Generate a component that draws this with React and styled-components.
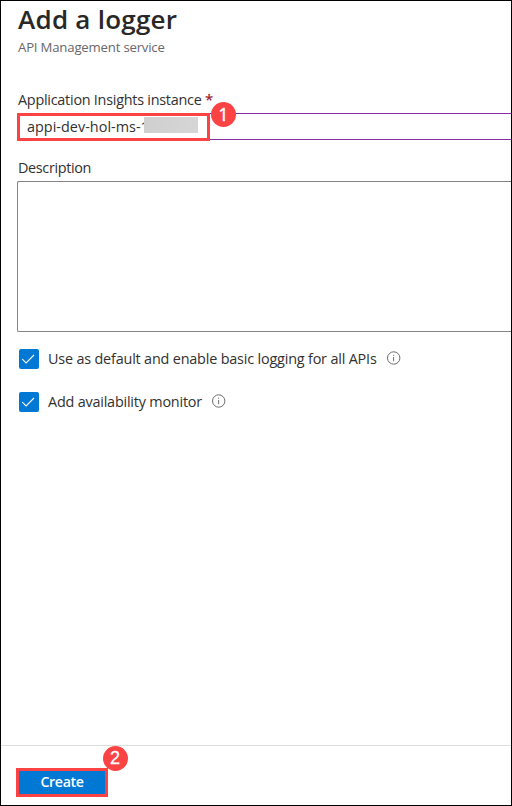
import React from "react";
import styled, { createGlobalStyle } from "styled-components";

const GlobalStyle = createGlobalStyle`
  *, *::before, *::after { box-sizing: border-box; }
  body { margin: 0; background: #fff; }
`;

const Panel = styled.main`
  width: 512px;
  height: 806px;
  border: 1px solid #000;
  background: #fff;
  color: #323130;
  font-family: "Open Sans", "Noto Sans", sans-serif;
  font-size: 14.4px;
  line-height: 20px;
  display: flex;
  flex-direction: column;
  overflow: hidden;
`;

const Header = styled.header`
  padding: 3px 0 0 17px;
`;

const Title = styled.h1`
  margin: 0;
  font-size: 26px;
  line-height: 30px;
  font-weight: 600;
  letter-spacing: ${(p) => p.$track}px;
  color: #292827;
  white-space: nowrap;
`;

const Subtitle = styled.p`
  margin: 3px 0 0;
  font-size: 13.2px;
  line-height: 20px;
  letter-spacing: ${(p) => p.$track}px;
  color: #69676a;
`;

const Form = styled.form`
  flex: 1;
  padding: 33px 0 0 16px;
  display: flex;
  flex-direction: column;
`;

const Label = styled.label`
  height: 20px;
  padding-left: 1px;
  letter-spacing: ${(p) => p.$track}px;
  white-space: nowrap;
`;

const Required = styled.span`
  color: #a4262c;
  font-size: 15px;
  line-height: 0;
  font-weight: 600;
`;

const InstanceField = styled.div`
  height: 27px;
  margin: 3px 0 18px;
  border: solid #8a2da5;
  border-width: 1px 0;
`;

const FieldHighlight = styled.div`
  position: relative;
  width: 193px;
  height: 28px;
  margin-top: -1px;
  border: 3px solid #fc4343;
  background: #fff;
  display: flex;
  padding: 1px 0 0 7px;
`;

const Value = styled.span`
  width: 117px;
  white-space: nowrap;
  letter-spacing: ${(p) => p.$track}px;
`;

const Redaction = styled.span`
  position: relative;
  width: 54px;
  height: 16px;
  background: linear-gradient(90deg, #cfcfcf, #d6d6d6);
`;

const Badge = styled.span`
  position: absolute;
  left: ${(p) => p.$left}px;
  top: ${(p) => p.$top}px;
  width: 25px;
  height: 25px;
  border-radius: 50%;
  background: #fc4343;
  color: #fff;
  font: 18px/25px ${(p) => p.$face}, sans-serif;
  letter-spacing: 0;
  -webkit-text-stroke: 0.3px #fff;
  text-align: center;
`;

const DescriptionField = styled.textarea`
  height: 151px;
  margin: 3px 0 17px;
  border: 1px solid #868482;
  border-right: 0;
  border-radius: 2px 0 0 2px;
  background: #fff;
  resize: none;
  outline: none;
`;

const Option = styled.div`
  display: flex;
  align-items: center;
  height: 20px;
  margin: 0 0 23px 2px;
`;

const CheckBox = styled.span`
  flex: none;
  width: 20px;
  height: 20px;
  margin-right: 9px;
  border-radius: 2px;
  background: #0078d4;
`;

const OptionText = styled.span`
  width: ${(p) => p.$width}px;
  white-space: nowrap;
  letter-spacing: ${(p) => p.$track}px;
`;

const InfoIcon = styled.svg`
  display: block;
  flex: none;
  margin-top: -2px;
`;

const Footer = styled.footer`
  height: 60px;
  border-top: 1px solid #dddcdb;
  padding: 22px 0 0 15px;
`;

const CreateButton = styled.button`
  position: relative;
  display: block;
  width: 92px;
  height: 29px;
  padding: 0 0 2px;
  border: 3px solid #fc4343;
  background: #0078d4;
  color: #fff;
  font: 600 14.2px/20px "Open Sans", "Noto Sans", sans-serif;
  letter-spacing: ${(p) => p.$track}px;
`;

function Check() {
  return (
    <CheckBox role="checkbox" aria-checked="true">
      <svg width="20" height="20" viewBox="0 0 20 20" display="block">
        <path d="M3.3 10.2 7.1 14 15 6" fill="none" stroke="#fff" strokeWidth="1.1" />
      </svg>
    </CheckBox>
  );
}

function Info() {
  return (
    <InfoIcon width="14" height="14" viewBox="0 0 14 14">
      <circle cx="6.7" cy="7" r="6.2" fill="none" stroke="#605e5c" strokeWidth="0.9" />
      <path d="M6.6 6v4.2M6.6 3.7v1.1" fill="none" stroke="#605e5c" strokeWidth="0.9" />
    </InfoIcon>
  );
}

export default function App() {
  return (
    <>
      <GlobalStyle />
      <Panel>
        <Header>
          <Title $track={0.25}>Add a logger</Title>
          <Subtitle $track={-0.2}>API Management service</Subtitle>
        </Header>
        <Form>
          <Label $track={-0.25}>
            Application Insights instance <Required>*</Required>
          </Label>
          <InstanceField>
            <FieldHighlight>
              <Value $track={0.03}>appi-dev-hol-ms-1</Value>
              <Redaction />
              <Badge $left={191} $top={-14} $face={'"Noto Sans"'}>1</Badge>
            </FieldHighlight>
          </InstanceField>
          <Label $track={-0.34}>Description</Label>
          <DescriptionField aria-label="Description" />
          <Option>
            <Check />
            <OptionText $track={-0.18} $width={339}>
              Use as default and enable basic logging for all APIs
            </OptionText>
            <Info />
          </Option>
          <Option>
            <Check />
            <OptionText $track={-0.2} $width={164}>Add availability monitor</OptionText>
            <Info />
          </Option>
        </Form>
        <Footer>
          <CreateButton type="button" $track={-0.35}>
            Create
            <Badge $left={83.5} $top={-25.5} $face={'"Liberation Sans"'}>2</Badge>
          </CreateButton>
        </Footer>
      </Panel>
    </>
  );
}
